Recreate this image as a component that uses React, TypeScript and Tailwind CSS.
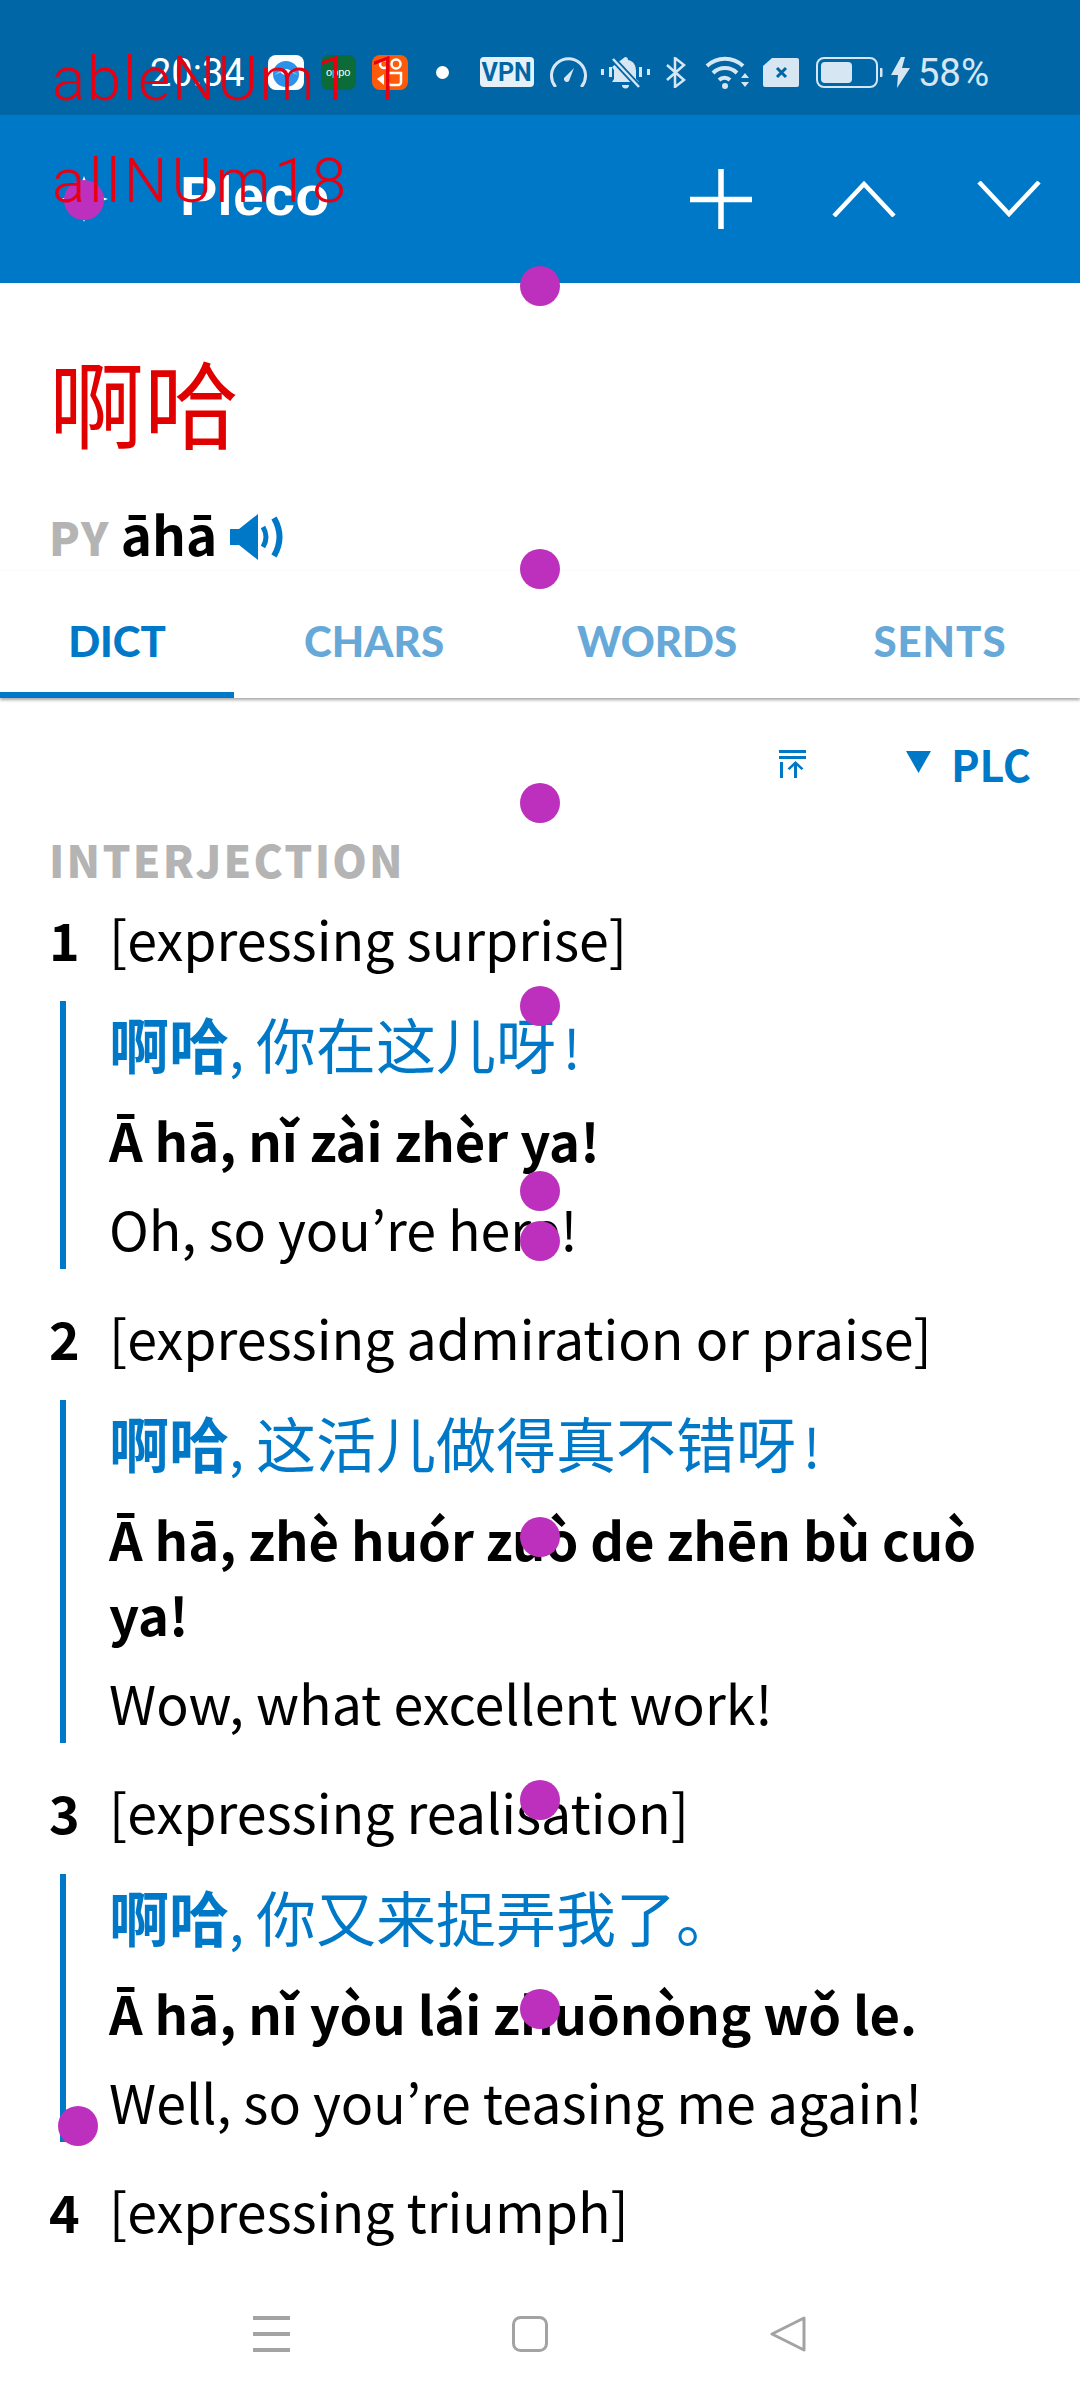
import React from "react";

const BLUE = "#0078c8";

const dots = [
  [84, 200], [540, 286], [540, 569], [540, 803], [540, 1006], [540, 1191],
  [540, 1241], [540, 1537], [540, 1800], [540, 2009], [78, 2126],
];

function Cjk({ children, bold }: { children: React.ReactNode; bold?: boolean }) {
  return <span className={`text-[60px] ${bold ? "font-bold" : ""}`}>{children}</span>;
}

function Apos() {
  return <span className="font-['Noto_Sans_CJK_KR',sans-serif]">’</span>;
}

function Entry({ n, gloss, zh, tail, py, en }: { n: string; gloss: string; zh?: string; tail?: string; py?: string; en?: React.ReactNode }) {
  return (
    <div className="mb-[30px]">
      <div className="flex h-[76px] items-baseline leading-[76px]">
        <span className="w-[60px] text-[52px] font-bold text-black">{n}</span>
        <span className="text-[53.7px] text-black">{gloss}</span>
      </div>
      {zh && (
        <div className="ml-[11px] mt-[25px] border-l-[6px] border-[#0078c8] pb-[3px] pl-[43px] pt-[4px]">
          <div className="h-[79px] text-[54px] leading-[76px] text-[#0078c8]">
            <Cjk bold>啊哈</Cjk>, <Cjk>{zh}</Cjk>
            {tail && <span className="ml-[7px]">{tail}</span>}
          </div>
          <div className="mt-[18px] text-[52.5px] font-bold leading-[75px] text-black">{py}</div>
          <div className="mt-[13px] text-[53.7px] leading-[76px] text-black">{en}</div>
        </div>
      )}
    </div>
  );
}

function AppIcons() {
  return (
    <div className="flex items-center">
      <svg width="36" height="35" viewBox="0 0 36 35" className="ml-[23px]">
        <rect width="36" height="35" rx="8" fill="#fdfdfd" />
        <circle cx="18" cy="19" r="13" fill="#2a92ea" />
        <path d="M6 20 Q18 10 30 20 Q18 14 6 20Z" fill="#8ccaf8" />
        <ellipse cx="18" cy="17" rx="5" ry="3" fill="#fff" />
      </svg>
      <div className="ml-[17px] flex h-[35px] w-[35px] items-center justify-center rounded-[8px] bg-[#0b6b39] font-['Liberation_Sans',sans-serif] text-[11px] leading-none text-white">oppo</div>
      <svg width="36" height="35" viewBox="0 0 36 35" className="ml-[16px]">
        <rect width="36" height="35" rx="8" fill="#ff5a0a" />
        <circle cx="12" cy="9" r="4" fill="none" stroke="#fff" strokeWidth="2.5" />
        <circle cx="24" cy="9" r="4.5" fill="none" stroke="#fff" strokeWidth="2.5" />
        <path d="M16 18h13v9a3 3 0 0 1-3 3h-7a3 3 0 0 1-3-3z" fill="none" stroke="#fff" strokeWidth="2.5" />
        <path d="M5 24l7-5v11z" fill="#fff" />
      </svg>
      <div className="ml-[28px] h-[13px] w-[13px] rounded-full bg-white" />
    </div>
  );
}

function StatusIcons() {
  const c = "#d6e6f3";
  return (
    <div className="flex items-center">
      <div className="ml-[31px] flex h-[30px] w-[54px] items-center justify-center rounded-[4px] bg-[#e6f0f8] font-['Roboto',sans-serif] text-[25px] font-bold leading-none text-[#0066a5]">VPN</div>
      <svg width="37" height="30" viewBox="0 0 37 30" fill="none" className="ml-[16px]">
        <path d="M5 29A17 17 0 1 1 32 29" stroke={c} strokeWidth="3" strokeLinecap="round" />
        <path d="M14 21l10-10-5 13a3 3 0 0 1-5-3z" fill={c} />
      </svg>
      <svg width="49" height="33" viewBox="0 0 49 33" fill={c} className="ml-[14px]">
        <path d="M24 1a3 3 0 0 1 3 3c6 1 8 6 8 11v8l3 3H11l2-3v-9l-2-3z" />
        <path d="M21 29h7a3.5 3.5 0 0 1-7 0z" />
        <rect y="13" width="3" height="6" /><rect x="8" y="11" width="3" height="10" />
        <rect x="38" y="11" width="3" height="10" /><rect x="46" y="13" width="3" height="6" />
        <path d="M12 3l26 28" stroke="#0066a5" strokeWidth="6" />
        <path d="M12 3l26 28" stroke={c} strokeWidth="2.5" />
      </svg>
      <svg width="21" height="31" viewBox="0 0 21 31" fill="none" stroke={c} strokeWidth="2.5" className="ml-[15px]">
        <path d="M2 8l17 15-9 7V1l9 7L2 23" />
      </svg>
      <svg width="45" height="34" viewBox="0 0 45 34" fill="none" className="ml-[19px]">
        <path d="M2 11a26 26 0 0 1 36 0" stroke={c} strokeWidth="4" />
        <path d="M8 18a17 17 0 0 1 24 0" stroke={c} strokeWidth="4" />
        <path d="M14 25a8 8 0 0 1 11 0" stroke={c} strokeWidth="4" />
        <circle cx="20" cy="31" r="3" fill={c} />
        <path d="M36 23l4-5 4 5zM36 27h8l-4 5z" fill={c} />
      </svg>
      <svg width="36" height="29" viewBox="0 0 36 29" className="ml-[13px]">
        <path d="M9 0h25a2 2 0 0 1 2 2v25a2 2 0 0 1-2 2H2a2 2 0 0 1-2-2V8z" fill={c} />
        <path d="M14 10l9 9M23 10l-9 9" stroke="#0066a5" strokeWidth="3" />
      </svg>
      <svg width="67" height="31" viewBox="0 0 67 31" fill="none" className="ml-[17px]">
        <rect x="1" y="1" width="60" height="29" rx="7" stroke={c} strokeWidth="2" />
        <rect x="5" y="5" width="31" height="21" rx="4" fill={c} />
        <path d="M64 11h1.500a1 1 0 0 1 1 1v7a1 1 0 0 1-1 1H64z" fill={c} />
      </svg>
      <svg width="19" height="31" viewBox="0 0 19 31" fill={c} className="ml-[8px]">
        <path d="M10 0L0 18h7l-1 13L19 11h-8l3-11z" />
      </svg>
      <span className="ml-[8px] mt-[2px] font-['Roboto',sans-serif] text-[38.5px] leading-none text-[#d6e6f3]">58%</span>
    </div>
  );
}

function Speaker() {
  return (
    <svg width="57" height="46" viewBox="0 0 57 46" fill="none" className="ml-[13px] mt-[7px] self-center">
      <path d="M0 15h9L28 0v46L9 31H0z" fill={BLUE} />
      <path d="M33 13q6 10 0 20" stroke={BLUE} strokeWidth="5" />
      <path d="M44 4q11 19 0 38" stroke={BLUE} strokeWidth="6" />
    </svg>
  );
}

export default function App() {
  return (
    <div className="relative flex h-[2400px] w-[1080px] flex-col overflow-hidden bg-white font-['Noto_Sans_CJK_SC',sans-serif]">
      <div className="flex h-[115px] shrink-0 items-start bg-[#0066a5] pl-[150px] pt-[55px]">
        <div className="flex h-[34px] items-center">
          <span className="mt-[2px] font-['Roboto',sans-serif] text-[38px] leading-none text-white">20:34</span>
          <AppIcons />
          <StatusIcons />
        </div>
      </div>

      <div className="flex h-[168px] shrink-0 items-center bg-[#0078c8]">
        <svg width="48" height="46" viewBox="0 0 48 46" fill="#fff" className="ml-[61px]">
          <path d="M23 0l6 17 18 6-18 6-6 17-6-17L0 23l17-6z" />
        </svg>
        <span className="ml-[71px] mt-[-6px] font-['Liberation_Sans',sans-serif] text-[56px] font-bold leading-none text-white">Pleco</span>
        <div className="ml-auto mr-[39px] flex items-center">
          <svg width="62" height="60" viewBox="0 0 62 60" stroke="#fff" strokeWidth="5.500">
            <path d="M31 0v60M0 30.500h62" />
          </svg>
          <svg width="64" height="36" viewBox="0 0 64 36" fill="none" stroke="#fff" strokeWidth="4.500" className="ml-[80px]">
            <path d="M2 35L32 3l30 32" />
          </svg>
          <svg width="64" height="36" viewBox="0 0 64 36" fill="none" stroke="#fff" strokeWidth="4.500" className="ml-[81px]">
            <path d="M2 1l30 32L62 1" />
          </svg>
        </div>
      </div>

      <div className="shrink-0 pl-[49px] pt-[63px]">
        <div className="text-[95px] leading-[110px] text-[#e00000]">啊哈</div>
        <div className="mt-[39px] flex h-[76px] items-baseline leading-[76px]">
          <span className="text-[45px] font-black tracking-[1.500px] text-[#b4b4b4]">PY</span>
          <span className="ml-[11px] text-[53px] font-bold text-black">āhā</span>
          <Speaker />
        </div>
      </div>

      <div className="relative flex h-[127px] shrink-0 overflow-hidden font-['Lato',sans-serif] text-[42px] font-black leading-[60px] shadow-[0_2px_3px_rgba(0,0,0,0.35)]">
        <div className="h-full w-[234px] shrink-0 border-b-[6px] border-[#0078c8] pt-[40px] text-center text-[#0078c8]">DICT</div>
        <div className="w-[280px] shrink-0 pt-[40px] text-center text-[#66a9d8]">CHARS</div>
        <div className="w-[286px] shrink-0 pt-[40px] text-center text-[#66a9d8]">WORDS</div>
        <div className="w-[280px] shrink-0 pt-[40px] text-center tracking-[1px] text-[#66a9d8]">SENTS</div>
      </div>

      <div className="min-h-0 flex-1 overflow-hidden pl-[49px] pr-[50px] pt-[36px]">
        <div className="flex h-[60px] items-center justify-end">
          <svg width="27" height="28" viewBox="0 0 27 28" fill={BLUE} className="mr-[100px]">
            <rect width="27" height="3" /><rect y="6" width="27" height="3" />
            <rect x="1" y="12" width="3" height="16" /><rect x="15" y="13" width="3" height="15" />
            <path d="M16.500 11l8 7.500-2 1.500-6-5.500-6 5.500-2-1.500z" />
          </svg>
          <svg width="25" height="22" viewBox="0 0 25 22" fill={BLUE} className="mr-[20px] mt-[-4px]">
            <path d="M0 0h25L12.500 22z" />
          </svg>
          <span className="mr-[-1px] mt-[-3px] text-[43px] font-bold leading-[60px] text-[#0078c8]">PLC</span>
        </div>
        <div className="mt-[35px] text-[44px] font-black leading-[60px] tracking-[2.200px] text-[#b4b4b4]">INTERJECTION</div>
        <div className="mt-[11px]">
          <Entry n="1" gloss="[expressing surprise]" zh="你在这儿呀" tail="!" py="Ā hā, nǐ zài zhèr ya!" en={<>Oh, so you<Apos />re here!</>} />
          <Entry n="2" gloss="[expressing admiration or praise]" zh="这活儿做得真不错呀" tail="!" py="Ā hā, zhè huór zuò de zhēn bù cuò ya!" en="Wow, what excellent work!" />
          <Entry n="3" gloss="[expressing realisation]" zh="你又来捉弄我了。" py="Ā hā, nǐ yòu lái zhuōnòng wǒ le." en={<>Well, so you<Apos />re teasing me again!</>} />
          <Entry n="4" gloss="[expressing triumph]" />
        </div>
      </div>

      <div className="flex h-[132px] shrink-0 items-center">
        <svg width="37" height="36" viewBox="0 0 37 36" fill="#a3a3a3" className="ml-[253px]">
          <rect width="37" height="4" /><rect y="16" width="37" height="4" /><rect y="32" width="37" height="4" />
        </svg>
        <svg width="36" height="36" viewBox="0 0 36 36" fill="none" stroke="#a3a3a3" strokeWidth="3" className="ml-[222px]">
          <rect x="1.500" y="1.500" width="33" height="33" rx="7" />
        </svg>
        <svg width="36" height="36" viewBox="0 0 36 36" fill="none" stroke="#a3a3a3" strokeWidth="3" strokeLinejoin="round" className="ml-[222px]">
          <path d="M34 2v32L2 18z" />
        </svg>
      </div>

      {dots.map(([x, y]) => (
        <div key={`${x}-${y}`} className="absolute h-[40px] w-[40px] rounded-full bg-[#bd30bd]" style={{ left: x - 20, top: y - 20 }} />
      ))}
      <div className="absolute left-[52px] top-[42px] font-['Roboto',sans-serif] text-[62px] font-light leading-[74px] tracking-[1.5px] text-[#e60012]">ableNUm1 1</div>
      <div className="absolute left-[52px] top-[144px] font-['Roboto',sans-serif] text-[62px] font-light leading-[74px] tracking-[3.5px] text-[#e60012]">allNUm18</div>
    </div>
  );
}
